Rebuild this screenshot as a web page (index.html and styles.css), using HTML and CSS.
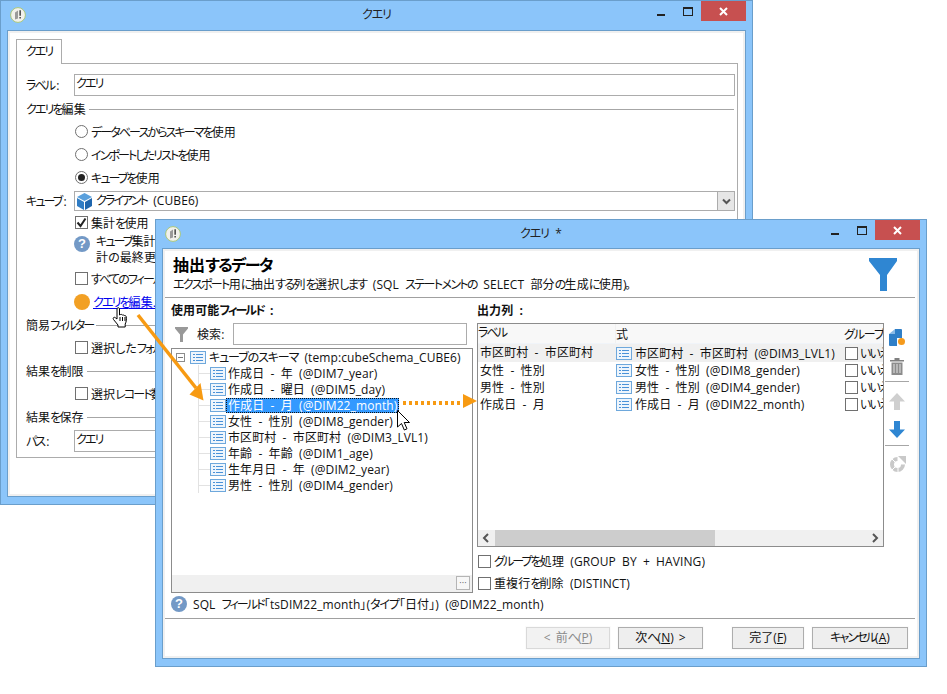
FILE: index.html
```html
<!DOCTYPE html>
<html lang="ja">
<head>
<meta charset="utf-8">
<title>クエリ</title>
<link rel="stylesheet" href="styles.css">
</head>
<body>
<svg class="defs" width="0" height="0">
  <symbol id="list" viewBox="0 0 16 13">
    <rect x=".5" y=".5" width="15" height="12" fill="#eef5fc" stroke="#6ea8dc"/>
    <path d="M3 3.500h2M6 3.500h7M3 6.500h2M6 6.500h7M3 9.500h2M6 9.500h7" stroke="#4a92d8" fill="none"/>
  </symbol>
  <symbol id="app" viewBox="0 0 16 16">
    <circle cx="8" cy="8" r="7.400" fill="#f1f1ec" stroke="#a9c77b"/>
    <path d="M5 5.500 8 3.500v8L5 12.500z" fill="#9a9a9a"/>
    <path d="M9.400 3.200h1.500v5.600H9.400zM9.400 10h1.500v1.600H9.400z" fill="#444"/>
  </symbol>
  <symbol id="help" viewBox="0 0 16 16">
    <circle cx="8" cy="8" r="8" fill="#7399c6"/>
    <text x="8" y="12.400" text-anchor="middle" class="help-q">?</text>
  </symbol>
</svg>

<main class="desk">
  <section class="window win-back">
    <header class="titlebar">
      <svg class="appicon"><use href="#app"/></svg>
      <span class="wintitle"><span class="kw">クエリ</span></span>
      <span class="winbtn min"></span>
      <span class="winbtn max"></span>
      <span class="winbtn close">
        <svg width="9" height="9" viewBox="0 0 9 9"><path d="M1 1l7 7M8 1L1 8" stroke="#fff" stroke-width="2"/></svg>
      </span>
    </header>
    <div class="client client-back">
      <div class="tabstrip"><span class="tab"><span class="k">クエリ</span></span></div>
      <div class="pane">
        <div class="field field-first"><label class="flabel"><span class="k">ラベル</span>:</label><div class="input"><span class="k">クエリ</span></div></div>
        <div class="sect sect-edit"><span><span class="k">クエリを</span>編集</span></div>
        <div class="opt"><span class="radio"></span><span><span class="k">データベースからスキーマを</span>使用</span></div>
        <div class="opt"><span class="radio"></span><span><span class="k">インポートしたリストを</span>使用</span></div>
        <div class="opt"><span class="radio on"></span><span><span class="k">キューブを</span>使用</span></div>
        <div class="field field-combo">
          <label class="flabel"><span class="k">キューブ</span>:</label>
          <div class="input combo">
            <svg class="cube" width="15" height="17" viewBox="0 0 15 17">
              <path d="M7.500 0 15 4 7.500 8 0 4z" fill="#5aa0dc"/>
              <path d="M0 5l7 4v8l-7-4z" fill="#2f7cc4"/>
              <path d="M15 5l-7 4v8l7-4z" fill="#1f66ad"/>
            </svg>
            <span class="combotext"><span class="k">クライアント</span> (CUBE6)</span>
            <span class="combobtn">
              <svg width="9" height="7" viewBox="0 0 9 7"><path d="M1 1.500 4.500 5 8 1.500" fill="none" stroke="#555" stroke-width="2"/></svg>
            </span>
          </div>
        </div>
        <div class="opt"><span class="check on"><svg width="11" height="11" viewBox="0 0 11 11"><path d="M1.500 5.500 4.500 9 9.500 1.500" fill="none" stroke="#222" stroke-width="2"/></svg></span><span>集計<span class="k">を</span>使用</span></div>
        <div class="note">
          <svg class="helpicon"><use href="#help"/></svg>
          <p class="notetext"><span class="k">キューブ</span>集計を使用して、データを抽出します。<br>計の最終更新日を確認してください。</p>
        </div>
        <div class="opt"><span class="check"></span><span class="k">すべてのフィールドを使用します</span></div>
        <div class="opt"><span class="dot"></span><a class="link" href="#"><span class="k">クエリを</span>編集...</a></div>
        <div class="sect sect-mid"><span>簡易<span class="k">フィルター</span></span></div>
        <div class="opt"><span class="check"></span><span>選択した<span class="k">フォルダーのみ</span></span></div>
        <div class="sect sect-mid"><span>結果<span class="k">を</span>制限</span></div>
        <div class="opt"><span class="check"></span><span>選択<span class="k">レコード</span>数を制限</span></div>
        <div class="sect sect-mid"><span>結果<span class="k">を</span>保存</span></div>
        <div class="field field-path"><label class="flabel"><span class="k">パス</span>:</label><div class="input"><span class="k">クエリ</span></div></div>
      </div>
    </div>
  </section>

  <section class="window win-front">
    <header class="titlebar">
      <svg class="appicon"><use href="#app"/></svg>
      <span class="wintitle"><span class="kw">クエリ</span> *</span>
      <span class="winbtn min"></span>
      <span class="winbtn max"></span>
      <span class="winbtn close">
        <svg width="9" height="9" viewBox="0 0 9 9"><path d="M1 1l7 7M8 1L1 8" stroke="#fff" stroke-width="2"/></svg>
      </span>
    </header>
    <div class="client client-front">
      <div class="head">
        <div class="headtext">
          <h1 class="headtitle">抽出<span class="kb">するデータ</span></h1>
          <p class="headsub"><span class="k">エクスポート</span>用<span class="k">に</span>抽出<span class="k">する</span>列<span class="k">を</span>選択<span class="k">します</span> (SQL <span class="k">ステートメントの</span> SELECT 部分<span class="k">の</span>生成<span class="k">に</span>使用<span class="k">)。</span></p>
        </div>
        <svg class="bigfunnel" width="28" height="33" viewBox="0 0 28 33"><path d="M0 0h28v3L18 17v16h-7V17L0 3z" fill="#2f86d2"/></svg>
      </div>
      <div class="columns">
        <div class="col-left">
          <div class="collabel">使用可能<span class="k">フィールド</span> :</div>
          <div class="search">
            <svg class="smallfunnel" width="13" height="15" viewBox="0 0 13 15"><path d="M0 0h13v1.500L8 7.500V15H5V7.500L0 1.500z" fill="#999"/></svg>
            <span class="searchlabel">検索:</span>
            <div class="searchinput"></div>
          </div>
          <div class="tree">
            <div class="treebody">
              <div class="troot">
                <span class="expander"></span>
                <svg class="listicon"><use href="#list"/></svg>
                <span><span class="kw">キューブのスキーマ</span> (temp:cubeSchema_CUBE6)</span>
              </div>
              <div class="tchildren">
                <div class="titem"><svg class="listicon"><use href="#list"/></svg><span class="tlabel">作成日 - 年 (@DIM7_year)</span></div>
                <div class="titem"><svg class="listicon"><use href="#list"/></svg><span class="tlabel">作成日 - 曜日 (@DIM5_day)</span></div>
                <div class="titem"><svg class="listicon"><use href="#list"/></svg><span class="tlabel selected">作成日 - 月 (@DIM22_month)</span></div>
                <div class="titem"><svg class="listicon"><use href="#list"/></svg><span class="tlabel">女性 - 性別 (@DIM8_gender)</span></div>
                <div class="titem"><svg class="listicon"><use href="#list"/></svg><span class="tlabel">市区町村 - 市区町村 (@DIM3_LVL1)</span></div>
                <div class="titem"><svg class="listicon"><use href="#list"/></svg><span class="tlabel">年齢 - 年齢 (@DIM1_age)</span></div>
                <div class="titem"><svg class="listicon"><use href="#list"/></svg><span class="tlabel">生年月日 - 年 (@DIM2_year)</span></div>
                <div class="titem"><svg class="listicon"><use href="#list"/></svg><span class="tlabel">男性 - 性別 (@DIM4_gender)</span></div>
              </div>
            </div>
            <div class="treefoot"><span class="morebtn">···</span></div>
          </div>
        </div>
        <div class="col-right">
          <div class="collabel">出力列 :</div>
          <div class="outrow">
            <div class="grid">
              <div class="gridbody">
                <div class="ghead">
                  <span class="c1"><span class="k">ラベル</span></span><span class="c2">式</span><span class="c3"><span class="kw">グループ</span></span>
                </div>
                <div class="grow first">
                  <span class="c1">市区町村 - 市区町村</span>
                  <span class="c2"><svg class="listicon"><use href="#list"/></svg>市区町村 - 市区町村 (@DIM3_LVL1)</span>
                  <span class="c3"><span class="check"></span><span class="k">いいえ</span></span>
                </div>
                <div class="grow">
                  <span class="c1">女性 - 性別</span>
                  <span class="c2"><svg class="listicon"><use href="#list"/></svg>女性 - 性別 (@DIM8_gender)</span>
                  <span class="c3"><span class="check"></span><span class="k">いいえ</span></span>
                </div>
                <div class="grow">
                  <span class="c1">男性 - 性別</span>
                  <span class="c2"><svg class="listicon"><use href="#list"/></svg>男性 - 性別 (@DIM4_gender)</span>
                  <span class="c3"><span class="check"></span><span class="k">いいえ</span></span>
                </div>
                <div class="grow">
                  <span class="c1">作成日 - 月</span>
                  <span class="c2"><svg class="listicon"><use href="#list"/></svg>作成日 - 月 (@DIM22_month)</span>
                  <span class="c3"><span class="check"></span><span class="k">いいえ</span></span>
                </div>
              </div>
              <div class="hscroll">
                <svg class="sarrow" width="16" height="16" viewBox="0 0 16 16"><path d="M10 4 6 8l4 4" fill="none" stroke="#555" stroke-width="2"/></svg>
                <span class="sthumb"></span>
                <svg class="sarrow" width="16" height="16" viewBox="0 0 16 16"><path d="M6 4l4 4-4 4" fill="none" stroke="#555" stroke-width="2"/></svg>
              </div>
            </div>
            <div class="toolbar">
              <svg class="tool t-add" width="18" height="18" viewBox="0 0 18 18">
                <path d="M1 5 7 5V0h6a1 1 0 0 1 1 1v8h-5v8H2a1 1 0 0 1-1-1z" fill="#2f7fc8"/>
                <path d="M7 0 1 5h6z" fill="#8bbbe6"/>
                <circle cx="13.500" cy="12.500" r="3.500" fill="#f59a1c"/>
              </svg>
              <svg class="tool t-trash" width="16" height="18" viewBox="0 0 16 18">
                <path d="M1 3h14v1.500H1zM5.500 1h5v2h-5z" fill="#808080"/>
                <path d="M2.500 5.500h11V18h-11z" fill="#8c8c8c"/>
                <path d="M5 7v9M8 7v9M11 7v9" stroke="#e4e4e4"/>
              </svg>
              <span class="toolsep s1"></span>
              <svg class="tool t-up" width="16" height="17" viewBox="0 0 16 17"><path d="M8 0l8 8.500h-5V17H5V8.500H0z" fill="#cfcfcf"/></svg>
              <svg class="tool t-down" width="16" height="17" viewBox="0 0 16 17"><path d="M5 0h6v8.500h5L8 17 0 8.500h5z" fill="#2f86d2"/></svg>
              <span class="toolsep s2"></span>
              <svg class="tool t-refresh" width="17" height="17" viewBox="0 0 17 17">
                <path d="M8.500 1a7.500 7.500 0 1 0 7.500 7.500h-4a3.500 3.500 0 1 1-3.500-3.500z" fill="#c9c9c9"/>
                <path d="M9 0h8v8z" fill="#c9c9c9"/>
                <path d="M3 3l3 3M3 14l3-3M9 16V12" stroke="#fff"/>
              </svg>
            </div>
          </div>
          <div class="optrow"><span class="check"></span><span><span class="k">グループを</span>処理 (GROUP BY + HAVING)</span></div>
          <div class="optrow"><span class="check"></span><span>重複行<span class="k">を</span>削除 (DISTINCT)</span></div>
        </div>
      </div>
      <div class="status">
        <svg class="helpicon"><use href="#help"/></svg>
        <span>SQL <span class="k">フィールド</span>「tsDIM22_month」(<span class="kw">タイプ</span>「日付」) (@DIM22_month)</span>
      </div>
      <div class="footer">
        <button class="btn b-prev" disabled>&lt; 前<span class="k">へ</span>(<u>P</u>)</button>
        <button class="btn b-next">次<span class="k">へ</span>(<u>N</u>) &gt;</button>
        <button class="btn b-done">完了(<u>F</u>)</button>
        <button class="btn b-cancel"><span class="k">キャンセル</span>(<u>A</u>)</button>
      </div>
    </div>
  </section>

  <svg class="arrows" width="947" height="694" viewBox="0 0 947 694">
    <path d="M138 315 196 388" stroke="#f79a12" stroke-width="3.500" fill="none"/>
    <path d="M203.500 400.500 189.500 394.500 200.500 383z" fill="#f79a12"/>
    <path d="M403 403H463" stroke="#f79a12" stroke-width="4" stroke-dasharray="3 3" fill="none"/>
    <path d="M477 401 463 394V408z" fill="#f79a12"/>
  </svg>
  <svg class="cursor c-hand" width="17" height="21" viewBox="0 0 17 21">
    <path d="M5 1.500c1-1 2-1 2.500 0V8l1-.5c.8-.3 1.500 0 1.800.6.800-.4 1.600-.2 1.900.5.800-.3 1.800.1 2 1 .4 2 .3 5-1 7.500V20H6v-2L1.500 12.500c-1-1.500.5-3 2-1.700L5 12z" fill="#fff" stroke="#000" stroke-linejoin="round"/>
    <path d="M8 10v4M10.500 10v4M13 10v4" stroke="#000" fill="none"/>
  </svg>
  <svg class="cursor c-arrow" width="13" height="21" viewBox="0 0 13 21">
    <path d="M.5.500V17l4-3.500 2.800 6.500 2.700-1.200-2.800-6.300H12.500z" fill="#fff" stroke="#000" stroke-linejoin="round"/>
  </svg>
</main>
</body>
</html>
```

FILE: styles.css
```css
* { box-sizing: border-box; }
html, body { margin: 0; padding: 0; background: #fff; }
body {
  font-family: "Open Sans", "Noto Sans CJK JP", sans-serif;
  font-size: 12px;
  font-feature-settings: "palt";
  letter-spacing: .1px;
  word-spacing: 3px;
  color: #111;
}
.k { letter-spacing: -1.9px; }
.kw { letter-spacing: -1.1px; }
.kb { letter-spacing: -1.5px; }
.headsub .k { letter-spacing: -1.6px; }
.flabel .k { margin-right: 2px; }
.defs { position: absolute; }
.desk { position: relative; width: 947px; height: 694px; overflow: hidden; background: #fff; }

/* windows on the desktop */
.window {
  position: absolute;
  display: flex;
  flex-direction: column;
  background: #8bc5fa;
  border: 1px solid #6a9ecb;
}
.win-back { left: 0; top: 0; width: 753px; height: 505px; }
.win-front { left: 155px; top: 219px; width: 772px; height: 448px; }

.titlebar { display: flex; align-items: flex-start; flex: none; height: 29px; position: relative; }
.win-front .titlebar { height: 28px; }
.appicon { width: 16px; height: 16px; margin: 6px 0 0 9px; flex: none; }
.wintitle {
  position: absolute;
  left: 0; right: 0; top: 6px;
  text-align: center;
  line-height: 16px;
  color: #222;
  pointer-events: none;
}
.winbtn { display: block; flex: none; position: relative; }
.winbtn.min { margin-left: auto; margin-top: 13px; width: 8px; height: 2px; background: #222; margin-right: 18px; }
.winbtn.max { margin-top: 6px; width: 10px; height: 9px; border: 1px solid #222; border-top-width: 2px; margin-right: 8px; }
.winbtn.close {
  width: 45px; height: 20px;
  margin-right: 6px;
  background: #c75050;
  display: flex; align-items: center; justify-content: center;
}

.client {
  flex: 1;
  margin: 0 6px 7px 6px;
  background: #fff;
  border: 1px solid #6a9ecb;
  box-shadow: inset 0 0 0 2px #f0f0f0;
}

/* back window */
.client-back { padding: 8px 7px 0 8px; }
.tabstrip { height: 24px; display: flex; align-items: flex-end; }
.tab {
  width: 46px; height: 25px;
  border: 1px solid #acacac; border-bottom: 0;
  background: #fff;
  line-height: 24px; text-align: center;
  position: relative; top: 1px; z-index: 1;
}
.pane {
  height: 395px;
  border: 1px solid #acacac;
  padding: 0 2px 0 9px;
}
.field { display: flex; align-items: center; }
.flabel { width: 48px; flex: none; }
.input {
  flex: 1;
  height: 22px;
  border: 1px solid #acacac;
  padding-left: 1px;
  line-height: 18px;
  background: #fff;
}
.field-first { margin-top: 10px; }
.field-combo { margin-top: 2px; }
.field-path { margin-top: 4px; }
.combo { height: 20px; display: flex; align-items: center; position: relative; padding-left: 2px; line-height: 18px; }
.cube { flex: none; margin-right: 4px; }
.combotext { flex: 1; }
.combobtn {
  width: 17px; height: 18px; flex: none;
  background: #e6e6e6; border-left: 1px solid #acacac;
  display: flex; align-items: center; justify-content: center;
}

.sect { height: 18px; display: flex; align-items: center; gap: 3px; margin-right: 1px; }
.sect::after { content: ""; flex: 1; height: 1px; background: #a6a6a6; }
.sect-edit { margin-top: 4px; margin-bottom: 2px; }
.sect-mid { margin-top: 3px; margin-bottom: 2px; }

.opt { height: 23px; display: flex; align-items: center; padding-left: 49px; white-space: nowrap; }
.radio {
  width: 13px; height: 13px; border-radius: 50%;
  border: 1px solid #707070; background: #fff;
  margin-right: 3px; flex: none;
  display: flex; align-items: center; justify-content: center;
}
.radio.on::after { content: ""; width: 7px; height: 7px; border-radius: 50%; background: #222; }
.check {
  width: 13px; height: 13px;
  border: 1px solid #707070; background: #fff;
  margin-right: 3px; flex: none;
  display: inline-flex; align-items: center; justify-content: center;
}
.note { height: 33px; display: flex; padding-left: 48px; white-space: nowrap; }
.helpicon { width: 16px; height: 16px; flex: none; }
.note .helpicon { margin-top: 2px; }
.help-q { font-size: 13px; font-weight: 700; fill: #fff; font-family: "Liberation Sans", sans-serif; }
.notetext { margin: 0 0 0 6px; line-height: 16px; }
.dot { width: 16px; height: 16px; border-radius: 50%; background: #f2a024; margin: 0 3px 0 -1px; flex: none; }
.link { color: #0000ee; text-decoration: underline; }

/* front window */
.client-front { display: flex; flex-direction: column; padding: 0 2px; }
.head {
  height: 49px;
  margin: 0 2px 0 0;
  border-bottom: 1px solid #a0a0a0;
  display: flex; justify-content: space-between;
  padding: 0 18px 0 8px;
  flex: none;
}
.headtitle { margin: 5px 0 0; font-size: 16px; font-weight: 700; line-height: 22px; color: #000; }
.headsub { margin: 0; line-height: 18px; }
.bigfunnel { margin-top: 9px; }
.columns { display: flex; flex: none; padding-left: 6px; gap: 4px; height: 296px; }
.col-left { width: 302px; flex: none; display: flex; flex-direction: column; }
.col-right { flex: 1; display: flex; flex-direction: column; }
.collabel { height: 25px; line-height: 26px; font-weight: 700; }
.search { display: flex; align-items: center; height: 22px; margin-bottom: 3px; padding-left: 4px; }
.smallfunnel { flex: none; }
.searchlabel { margin-left: 9px; width: 36px; flex: none; }
.searchinput { width: 235px; height: 22px; border: 1px solid #acacac; margin-left: auto; margin-right: 6px; }
.tree {
  height: 245px;
  border: 1px solid #8c8c8c;
  display: flex; flex-direction: column;
}
.treebody { flex: 1; }
.troot { display: flex; align-items: center; height: 16px; white-space: nowrap; }
.expander {
  width: 9px; height: 9px; border: 1px solid #8c8c8c; margin: 0 5px 0 4px; flex: none;
  background: linear-gradient(#777,#777) center / 5px 1px no-repeat;
}
.listicon { width: 16px; height: 13px; flex: none; }
.troot .listicon { margin-right: 3px; }
.tchildren { margin-left: 26px; border-left: 1px solid #e2e2e2; height: 128px; padding-left: 11px; }
.titem { height: 16px; display: flex; align-items: center; white-space: nowrap; position: relative; }
.titem::before { content: ""; position: absolute; left: -11px; top: 8px; width: 11px; height: 1px; background: #e2e2e2; }
.tlabel { padding: 0 2px; line-height: 15px; }
.selected { background: #3399ff; color: #fff; outline: 1px dotted #111; outline-offset: -1px; }
.treefoot { height: 17px; background: #f0f0f0; display: flex; justify-content: flex-end; flex: none; }
.morebtn {
  width: 14px; height: 14px; margin: 1px 2px 0 0;
  border: 1px solid #b5b5b5; background: #f7f7f7;
  font-size: 9px; line-height: 11px; text-align: center; color: #555;
}
.outrow { display: flex; height: 224px; }
.grid {
  width: 407px; flex: none;
  border: 1px solid #8c8c8c;
  display: flex; flex-direction: column;
  overflow: hidden;
}
.gridbody { flex: 1; }
.ghead { height: 20px; display: flex; background: #f8f8f8; align-items: center; border-bottom: 1px solid #f0f4f9; }
.ghead .c1 { padding-left: 0; }
.c1 { width: 138px; flex: none; padding-left: 2px; white-space: nowrap; border-right: 1px solid #f0f0f0; height: 100%; line-height: 18px; }
.c2 { width: 226px; flex: none; white-space: nowrap; display: flex; align-items: center; }
.c3 { flex: 1; min-width: 0; white-space: nowrap; overflow: hidden; display: flex; align-items: center; padding-left: 3px; }
.c3 .check { margin-right: 2px; }
.ghead .c3 { padding-left: 2px; }
.grow { height: 17px; display: flex; align-items: center; line-height: 17px; }
.grow .c1 { border: 0; line-height: 17px; }
.grow.first { height: 18px; background: #f0f0f0; }
.grow .listicon { margin-right: 3px; }
.hscroll { height: 16px; background: #f0f0f0; display: flex; align-items: center; flex: none; }
.sarrow { flex: none; }
.sthumb { width: 220px; height: 16px; background: #cdcdcd; margin: 0 auto 0 1px; }
.toolbar { width: 27px; flex: none; display: flex; flex-direction: column; align-items: center; padding: 6px 2px 0 1px; }
.tool { flex: none; display: block; }
.t-trash { margin-top: 10px; }
.toolsep { display: block; width: 24px; height: 1px; background: #a6a6a6; flex: none; }
.s1 { margin-top: 6px; }
.t-up { margin-top: 11px; }
.t-down { margin-top: 11px; }
.s2 { margin-top: 7px; }
.t-refresh { margin-top: 10px; }
.optrow { display: flex; align-items: center; height: 22px; padding-left: 1px; white-space: nowrap; }
.outrow + .optrow { margin-top: 3px; }
.status { height: 25px; flex: none; display: flex; align-items: center; padding: 0 0 4px 6px; gap: 6px; border-bottom: 1px solid #a0a0a0; margin-right: 2px; white-space: nowrap; }
.footer { display: flex; flex: none; padding: 8px 0 0 361px; }
.btn {
  height: 22px;
  border: 1px solid #adadad;
  background: #eeeeee;
  font: inherit;
  font-feature-settings: "palt";
  word-spacing: 2px;
  color: #111;
  padding: 0;
  outline: 1px solid #fbfbfb;
  line-height: 18px;
}
.btn[disabled] { color: #8a8a8a; border-color: #d9d9d9; background: #f2f2f2; }
.b-prev { width: 84px; margin-right: 8px; }
.b-next { width: 85px; margin-right: 29px; }
.b-done { width: 72px; margin-right: 8px; }
.b-cancel { width: 96px; }

/* annotations laid over the windows */
.arrows { position: absolute; left: 0; top: 0; pointer-events: none; }
.cursor { position: absolute; }
.c-hand { left: 112px; top: 307px; }
.c-arrow { left: 397px; top: 410px; }
```
